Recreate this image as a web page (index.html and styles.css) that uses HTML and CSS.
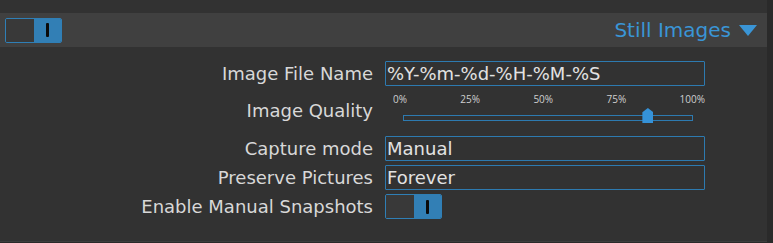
FILE: index.html
```html
<!DOCTYPE html>
<html lang="en">
<head>
    <meta charset="UTF-8">
    <meta name="viewport" content="width=device-width, initial-scale=1.0">
    <title>Still Images</title>
    <link rel="stylesheet" href="styles.css">
</head>
<body>
    <div class="panel">
        <div class="panel-header">
            <div class="toggle">
                <span class="toggle-off"></span>
                <span class="toggle-on"><span class="toggle-bar"></span></span>
            </div>
            <div class="section-title">Still Images <span class="caret"></span></div>
        </div>

        <div class="form">
            <label class="label">Image File Name</label>
            <input class="field" type="text" value="%Y-%m-%d-%H-%M-%S">

            <label class="label label-quality">Image Quality</label>
            <div class="slider">
                <div class="ticks">
                    <span>0%</span><span>25%</span><span>50%</span><span>75%</span><span>100%</span>
                </div>
                <div class="track">
                    <span class="thumb" style="left: 84.5%"></span>
                </div>
            </div>

            <label class="label">Capture mode</label>
            <input class="field" type="text" value="Manual">

            <label class="label">Preserve Pictures</label>
            <input class="field" type="text" value="Forever">

            <label class="label">Enable Manual Snapshots</label>
            <div class="toggle">
                <span class="toggle-off"></span>
                <span class="toggle-on"><span class="toggle-bar"></span></span>
            </div>
        </div>
    </div>
</body>
</html>
```

FILE: styles.css
```css
body {
    margin: 0;
    background-color: #2a2a2a;
    font-family: "DejaVu Sans", "Open Sans", sans-serif;
    color: #dcdcdc;
}
.panel {
    width: 767px;
    height: 242px;
    background-color: #323232;
    border-bottom: 1px solid #3d3d3d;
    padding-top: 13px;
    box-sizing: border-box;
}
.panel-header {
    display: flex;
    align-items: center;
    justify-content: space-between;
    height: 34px;
    background-color: #404040;
    padding: 0 10px 0 5px;
}
.toggle {
    display: flex;
    width: 57px;
    height: 25px;
    box-sizing: border-box;
    border: 1px solid #2f7fb6;
    border-radius: 2px;
    overflow: hidden;
}
.toggle-off {
    width: 28px;
    background-color: #393939;
}
.toggle-on {
    flex: 1;
    display: flex;
    align-items: center;
    justify-content: center;
    background-color: #327fb5;
}
.toggle-bar {
    width: 3px;
    height: 14px;
    background-color: #0a0a0a;
    border-radius: 1px;
}
.section-title {
    display: flex;
    align-items: center;
    gap: 8px;
    font-size: 20px;
    color: #3a95d6;
}
.caret {
    width: 0;
    height: 0;
    border-left: 9px solid transparent;
    border-right: 9px solid transparent;
    border-top: 11px solid #3a95d6;
}
.form {
    display: grid;
    grid-template-columns: 373px 320px;
    column-gap: 12px;
    row-gap: 4px;
    align-items: center;
    padding-top: 14px;
}
.label {
    text-align: right;
    font-size: 18px;
    line-height: 25px;
    color: #d8d8d8;
}
.label-quality {
    align-self: start;
    padding-top: 8px;
}
.field {
    width: 320px;
    height: 25px;
    box-sizing: border-box;
    margin: 0;
    padding: 0 1px;
    border: 1px solid #2d7ab0;
    border-radius: 1px;
    background-color: #323232;
    color: #e2e2e2;
    font-family: "DejaVu Sans", "Open Sans", sans-serif;
    font-size: 18px;
}
.slider {
    height: 42px;
    padding: 0 0 0 8px;
}
.ticks {
    display: flex;
    justify-content: space-between;
    width: 312px;
    margin-top: 2px;
    font-family: "Open Sans", sans-serif;
    font-size: 10px;
    line-height: 14px;
    color: #cfcfcf;
}
.track {
    position: relative;
    width: 290px;
    height: 6px;
    box-sizing: border-box;
    margin: 9px 0 0 10px;
    border: 1px solid #2d7ab0;
}
.thumb {
    position: absolute;
    top: -8px;
    width: 11px;
    height: 15px;
    margin-left: -5px;
    background-color: #3592d8;
    clip-path: polygon(50% 0, 100% 28%, 100% 100%, 0 100%, 0 28%);
}
```
